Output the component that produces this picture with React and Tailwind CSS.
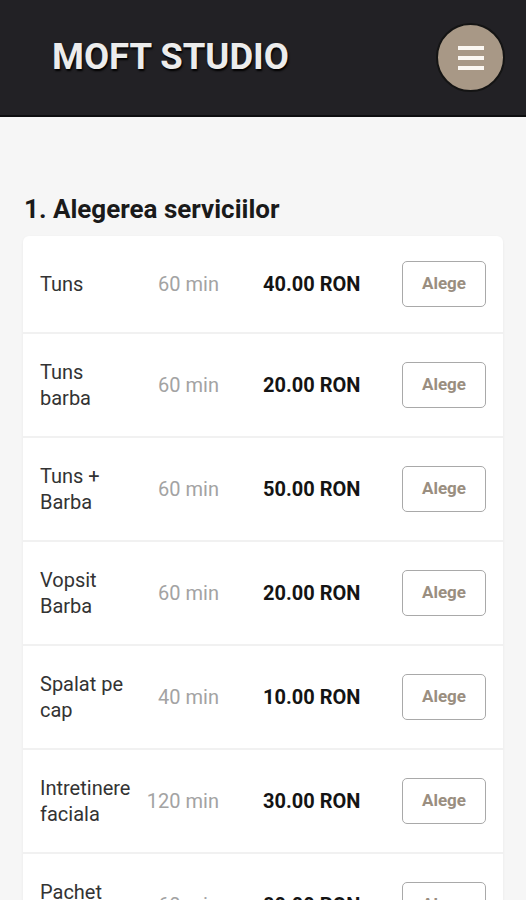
const services = [
  { name: 'Tuns', duration: '60 min', price: '40.00 RON' },
  { name: 'Tuns barba', duration: '60 min', price: '20.00 RON' },
  { name: 'Tuns + Barba', duration: '60 min', price: '50.00 RON' },
  { name: 'Vopsit Barba', duration: '60 min', price: '20.00 RON' },
  { name: 'Spalat pe cap', duration: '40 min', price: '10.00 RON' },
  { name: 'Intretinere faciala', duration: '120 min', price: '30.00 RON' },
  { name: 'Pachet complet', duration: '60 min', price: '80.00 RON' },
];

export default function App() {
  return (
    <div className="min-h-screen bg-[#f6f6f6] font-['Roboto',sans-serif]">
      <header className="h-[117px] bg-[#222125] border-b-2 border-[#0e0e10] flex items-center justify-between pl-[52px] pr-[21px]">
        <h1 className="text-[36.5px] font-bold text-[#ececec] [text-shadow:1px_2px_2px_#000]">
          MOFT STUDIO
        </h1>
        <button className="w-[69px] h-[69px] rounded-full bg-[#a89886] border-2 border-[#141414] flex flex-col items-center justify-center gap-[6px]">
          <span className="block w-[26px] h-[4px] bg-[#fbf7f2]" />
          <span className="block w-[26px] h-[4px] bg-[#fbf7f2]" />
          <span className="block w-[26px] h-[4px] bg-[#fbf7f2]" />
        </button>
      </header>

      <main className="px-[23px] pt-[77px]">
        <h2 className="text-[26px] leading-[30px] font-bold text-[#1a1a1a] mb-[12px] pl-px">
          1. Alegerea serviciilor
        </h2>
        <div className="bg-white rounded-[6px] shadow-[0_1px_3px_rgba(0,0,0,0.06)] divide-y-2 divide-[#f1f1f1]">
          {services.map((s) => (
            <div key={s.name} className="flex items-center px-[17px] py-[25px]">
              <div className="w-[95px] shrink-0 text-[20px] leading-[26px] text-[#333]">
                {s.name}
              </div>
              <div className="w-[84px] shrink-0 text-right text-[20px] text-[#a3a3a3]">
                {s.duration}
              </div>
              <div className="ml-[44px] flex-1 text-[20px] font-bold text-[#141414]">
                {s.price}
              </div>
              <button className="w-[84px] h-[46px] shrink-0 rounded-[5px] border border-[#a9a9a9] text-[17px] font-bold text-[#9a8e80]">
                Alege
              </button>
            </div>
          ))}
        </div>
      </main>
    </div>
  );
}
